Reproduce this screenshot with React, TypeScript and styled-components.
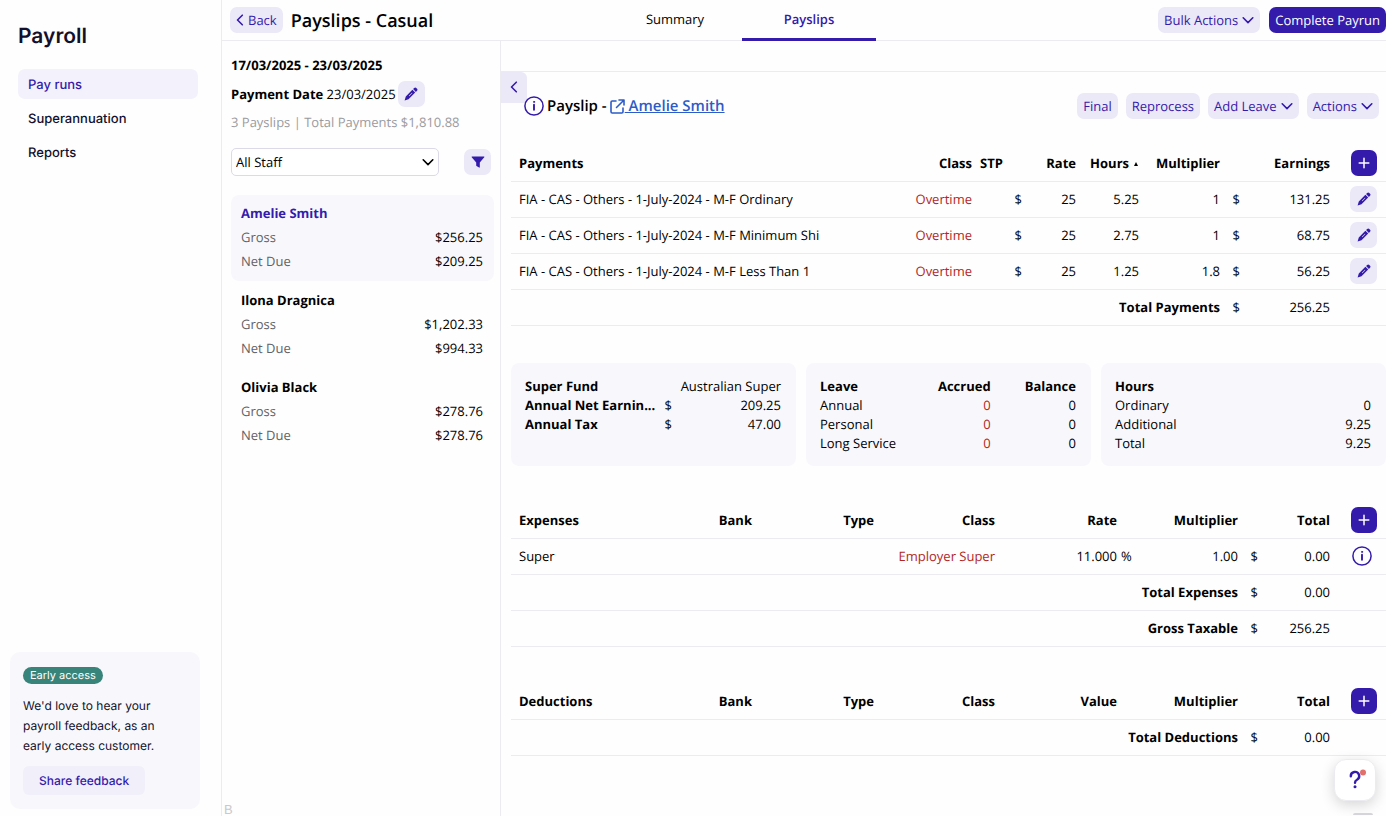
import React from "react";
import styled, { createGlobalStyle, css } from "styled-components";

const ink = "#000";
const violet = "#351bab";
const tint = "#ebe8f7";
const line = "#ececf0";
const red = "#b3261e";

const GlobalStyle = createGlobalStyle`
  * { box-sizing: border-box; }
  body {
    margin: 0;
    background: #fefefe;
    color: ${ink};
    font-family: "Open Sans", "Noto Sans", sans-serif;
    font-size: 13px;
    line-height: 18px;
    text-rendering: geometricPrecision;
  }
  button, select { font: inherit; color: inherit; text-rendering: inherit; }
  h1, h2, p, ul { margin: 0; padding: 0; }
  ul { list-style: none; }
`;

const Shell = styled.div`
  display: flex;
  min-height: 100vh;
`;

const Sidebar = styled.aside`
  display: flex;
  flex-direction: column;
  flex: 0 0 222px;
  padding: 21px 21px 7px 10px;
  border-right: 1px solid ${line};
  font-family: Inter, sans-serif;
  color: #14102b;
`;

const Brand = styled.h1`
  padding-left: 8px;
  font-size: 21px;
  line-height: 32px;
  font-weight: 600;
`;

const Nav = styled.nav`
  display: flex;
  flex-direction: column;
  gap: 4px;
  margin: 16px 2px 0 8px;
`;

const NavLink = styled.a<{ $active?: boolean }>`
  padding: 7px 10px 5px;
  border-radius: 7px;
  font-size: 13px;
  line-height: 18px;
  font-weight: 500;
  text-decoration: none;
  color: ${(p) => (p.$active ? violet : "#14102b")};
  background: ${(p) => (p.$active ? "#f3f1fb" : "transparent")};
`;

const Feedback = styled.section`
  margin-top: auto;
  padding: 14px 13px 14px;
  border-radius: 10px;
  background: #f8f8fc;
  font-size: 12px;
`;

const Badge = styled.span`
  display: inline-block;
  padding: 0 7px;
  border-radius: 9px;
  background: #38837a;
  color: #fff;
  font-size: 11px;
  line-height: 17px;
`;

const FeedbackText = styled.p`
  margin: 12px 0 10px;
  line-height: 20px;
`;

const ShareButton = styled.button`
  padding: 5px 16px;
  border: 0;
  border-radius: 6px;
  background: #f1effa;
  color: ${violet};
  font-weight: 500;
  line-height: 19px;
`;

const Workspace = styled.div`
  display: flex;
  flex-direction: column;
  flex: 1;
  min-width: 0;
`;

const Topbar = styled.header`
  display: flex;
  align-items: stretch;
  height: 41px;
  border-bottom: 1px solid ${line};
`;

const TitleGroup = styled.div`
  display: flex;
  align-items: center;
  gap: 8px;
  flex: 0 0 386px;
  padding-left: 8px;
`;

const PageTitle = styled.h1`
  && { padding-top: 2px; }
  font-size: 18px;
  line-height: 24px;
  font-weight: 600;
`;

const Tab = styled.a<{ $active?: boolean }>`
  width: 134px;
  height: 41px;
  padding-top: 10px;
  text-align: center;
  text-decoration: none;
  color: ${(p) => (p.$active ? violet : ink)};
  font-weight: ${(p) => (p.$active ? 600 : 400)};
  border-bottom: 3px solid ${(p) => (p.$active ? violet : "transparent")};
`;

const TopActions = styled.div`
  display: flex;
  align-items: center;
  gap: 9px;
  margin-left: auto;
`;

const Button = styled.button<{ $primary?: boolean }>`
  display: inline-flex;
  align-items: center;
  gap: 4px;
  height: 26px;
  padding: 0 6px;
  border: 0;
  border-radius: 7px;
  white-space: nowrap;
  background: ${(p) => (p.$primary ? violet : tint)};
  color: ${(p) => (p.$primary ? "#fff" : violet)};
`;

const IconButton = styled(Button)`
  justify-content: center;
  width: 27px;
  padding: 0;
  vertical-align: middle;
`;

const InfoButton = styled(IconButton)`
  width: 30px;
  background: none;
`;

const AddSquare = styled(IconButton)`
  width: 26px;
`;

const Body = styled.div`
  display: flex;
  flex: 1;
`;

const StaffPanel = styled.aside`
  display: flex;
  flex-direction: column;
  flex: 0 0 279px;
  padding: 15px 6px 0 9px;
  border-right: 1px solid ${line};
`;

const Period = styled.p`
  font-weight: 700;
`;

const PaymentDate = styled.div`
  display: flex;
  align-items: center;
  gap: 2px;
  margin-top: 7px;
`;

const Muted = styled.p`
  margin-top: 6px;
  color: #9b9b9f;
`;

const FilterRow = styled.div`
  display: flex;
  justify-content: space-between;
  align-items: center;
  margin: 17px 3px 19px 0;
`;

const SelectWrap = styled.div`
  display: grid;
  width: 208px;
  align-items: center;
  & > * { grid-area: 1 / 1; }
  & > svg { justify-self: end; margin-right: 5px; pointer-events: none; }
`;

const Select = styled.select`
  appearance: none;
  height: 28px;
  padding: 0 4px;
  border: 1px solid #dcdae8;
  border-radius: 5px;
  background: #fff;
`;

const StaffCard = styled.li<{ $active?: boolean }>`
  display: grid;
  grid-template-columns: 1fr auto;
  margin-bottom: 1px;
  padding: 6px 11px 8px 10px;
  border-radius: 8px;
  line-height: 24px;
  background: ${(p) => (p.$active ? "#f8f8fc" : "transparent")};
`;

const StaffName = styled.strong<{ $active?: boolean }>`
  grid-column: 1 / -1;
  color: ${(p) => (p.$active ? violet : ink)};
`;

const StaffLabel = styled.span`
  color: #626266;
`;

const StaffAmount = styled.span`
  text-align: right;
`;

const FootNote = styled.span`
  margin: auto 0 0 -7px;
  font-family: "Liberation Sans", sans-serif;
  font-size: 13px;
  line-height: 12px;
  color: #c9c9cd;
`;

const Detail = styled.main`
  position: relative;
  flex: 1;
  min-width: 0;
`;

const Strip = styled.div`
  height: 31px;
  border-bottom: 1px solid ${line};
`;

const Collapse = styled.button`
  position: absolute;
  top: 31px;
  left: 0;
  width: 26px;
  height: 31px;
  padding: 0;
  border: 0;
  border-radius: 0 6px 0 0;
  background: ${tint};
  color: ${violet};
`;

const SlipHead = styled.div`
  display: flex;
  align-items: center;
  gap: 8px;
  padding: 21px 7px 27px 23px;
  & > h2 { margin-right: auto; }
`;

const SlipTitle = styled.h2`
  position: relative;
  display: flex;
  align-items: center;
  gap: 3px;
  font-size: 15px;
  line-height: 22px;
  font-weight: 600;
`;

const StaffLink = styled.a`
  display: flex;
  align-items: center;
  color: #2d5cc8;
  white-space: pre;
`;

const Sections = styled.div`
  display: flex;
  flex-direction: column;
  gap: 37px;
  padding-left: 10px;
`;

const Table = styled.table`
  width: 100%;
  table-layout: fixed;
  border-collapse: separate;
  border-spacing: 0;
  & tr > * {
    height: 36px;
    padding: 0 4px 2px;
    text-align: right;
    white-space: nowrap;
    border-bottom: 1px solid ${line};
  }
  & tr > *:first-child { padding-left: 8px; }
  & tr > *:last-child { padding: 0 9px 1px 0; }
`;

const cell = css<{ $left?: boolean; $red?: boolean; $flush?: boolean }>`
  && { text-align: ${(p) => (p.$left ? "left" : "right")}; }
  ${(p) => p.$flush && "&& { padding-left: 0; padding-right: 0; }"}
  color: ${(p) => (p.$red ? red : ink)};
`;
const Td = styled.td`${cell}`;
const Th = styled.th`${cell}`;

const Col = styled.col<{ $w?: number }>`
  width: ${(p) => (p.$w ? `${p.$w}px` : "auto")};
`;

const Cards = styled.div`
  display: grid;
  grid-template-columns: repeat(3, 1fr);
  gap: 10px;
`;

const Card = styled.section`
  min-width: 0;
  padding: 14px 15px 13px 14px;
  border-radius: 8px;
  background: #f8f8fc;
`;

const CardTable = styled.table`
  width: 100%;
  table-layout: fixed;
  border-spacing: 0;
  line-height: 19px;
  & tr > * { padding: 0; text-align: right; }
  & tr > *:first-child { text-align: left; white-space: nowrap; }
`;

const Flag = styled.td`
  color: ${red};
`;

const Help = styled.button`
  position: fixed;
  right: 10px;
  bottom: 15px;
  display: grid;
  place-items: center;
  width: 42px;
  height: 42px;
  padding: 0;
  border: 1px solid #ececf0;
  border-radius: 12px;
  background: #fff;
  box-shadow: 0 4px 14px rgba(0, 0, 0, 0.16);
  &::after {
    content: "";
    position: absolute;
    top: 53px;
    left: 18px;
    width: 20px;
    height: 2px;
    border-radius: 4px 4px 0 0;
    background: #d4d4da;
  }
`;

const stroke = {
  fill: "none",
  stroke: "currentColor",
  strokeLinecap: "round" as const,
  strokeLinejoin: "round" as const,
};

const Down = () => (
  <svg width="12" height="12" viewBox="0 0 12 12" {...stroke} strokeWidth="1.6">
    <path d="M1.200 3.800 6 8.600l4.800-4.800" />
  </svg>
);
const Left = () => (
  <svg width="8" height="12" viewBox="0 0 8 12" {...stroke} strokeWidth="1.6">
    <path d="M6.300 1.200 1.500 6l4.800 4.800" />
  </svg>
);
const Plus = () => (
  <svg width="12" height="12" viewBox="0 0 12 12" {...stroke} strokeWidth="1.500">
    <path d="M6 1.200v9.600M1.200 6h9.600" />
  </svg>
);
const Pencil = () => (
  <svg width="14" height="14" viewBox="0 0 14 14" fill="currentColor">
    <path fillRule="evenodd" d="M10.200 1a1.500 1.500 0 0 1 2.100 0l.7.7a1.500 1.500 0 0 1 0 2.100l-1.100 1.100-2.800-2.800zM8.400 2.800l2.800 2.800-6.700 6.600-3.900 1.200 1.200-3.900zM8 5.700 4.900 8.800l.4.4 3.100-3.100z" />
  </svg>
);
const Funnel = () => (
  <svg width="14" height="14" viewBox="0 0 14 14" fill="currentColor">
    <path d="M1 1.500h12c.4 0 .5.400.3.700L8.800 7.500v4.800c0 .4-.4.500-.7.300L5.500 11c-.2-.1-.3-.3-.3-.5v-3L.7 2.200c-.2-.3-.1-.7.3-.7z" />
  </svg>
);
const Info = () => (
  <svg width="20" height="20" viewBox="0 0 20 20" {...stroke} color={violet}>
    <circle cx="10" cy="10" r="9.100" strokeWidth="1.500" />
    <path d="M10 8.800v5" strokeWidth="1.900" />
    <circle cx="10" cy="5.900" r="0.600" strokeWidth="1" />
  </svg>
);
const External = () => (
  <svg width="15" height="15" viewBox="0 0 15 15" {...stroke} strokeWidth="1.600">
    <path d="M6 2H2.200Q1 2 1 3.200v9.600Q1 14 2.200 14h9.600q1.200 0 1.200-1.200V9M9 1h5v5M13.800 1.200 6.500 8.500" />
  </svg>
);

const SortMark = styled.svg`
  margin: 0 1px 2px 5px;
`;

const navItems = ["Pay runs", "Superannuation", "Reports"];

const staff = [
  { name: "Amelie Smith", gross: "$256.25", net: "$209.25" },
  { name: "Ilona Dragnica", gross: "$1,202.33", net: "$994.33" },
  { name: "Olivia Black", gross: "$278.76", net: "$278.76" },
];

const payments = [
  { name: "M-F Ordinary", hours: "5.25", multiplier: "1", earnings: "131.25" },
  { name: "M-F Minimum Shi", hours: "2.75", multiplier: "1", earnings: "68.75" },
  { name: "M-F Less Than 1", hours: "1.25", multiplier: "1.8", earnings: "56.25" },
];

const AddButton = ({ label }: { label: string }) => (
  <AddSquare $primary aria-label={label}>
    <Plus />
  </AddSquare>
);

const LedgerHead = ({ title, value }: { title: string; value: string }) => (
  <>
    <colgroup>
      <Col />
      {[122, 122, 121, 122, 15, 106, 20, 72, 52].map((w, i) => (
        <Col key={i} $w={w} />
      ))}
    </colgroup>
    <thead>
      <tr>
        <Th $left scope="col">{title}</Th>
        <Th scope="col">Bank</Th>
        <Th scope="col">Type</Th>
        <Th scope="col">Class</Th>
        <Th scope="col">{value}</Th>
        <Th scope="col" colSpan={2}>Multiplier</Th>
        <Th scope="col" colSpan={2}>Total</Th>
        <Td><AddButton label={`Add to ${title}`} /></Td>
      </tr>
    </thead>
  </>
);

const LedgerTotal = ({ label, amount }: { label: string; amount: string }) => (
  <tr>
    <Th scope="row" colSpan={7}>{label}</Th>
    <Td>$</Td>
    <Td>{amount}</Td>
    <Td />
  </tr>
);

export default function App() {
  return (
    <Shell>
      <GlobalStyle />
      <Sidebar>
        <Brand>Payroll</Brand>
        <Nav>
          {navItems.map((item, i) => (
            <NavLink key={item} href="#" $active={i === 0}>{item}</NavLink>
          ))}
        </Nav>
        <Feedback>
          <Badge>Early access</Badge>
          <FeedbackText>We'd love to hear your<br />payroll feedback, as an<br />early access customer.</FeedbackText>
          <ShareButton>Share feedback</ShareButton>
        </Feedback>
      </Sidebar>
      <Workspace>
        <Topbar>
          <TitleGroup>
            <Button><Left />Back</Button>
            <PageTitle>Payslips - Casual</PageTitle>
          </TitleGroup>
          <Tab href="#">Summary</Tab>
          <Tab href="#" $active>Payslips</Tab>
          <TopActions>
            <Button>Bulk Actions <Down /></Button>
            <Button $primary>Complete Payrun</Button>
          </TopActions>
        </Topbar>
        <Body>
          <StaffPanel>
            <Period>17/03/2025 - 23/03/2025</Period>
            <PaymentDate>
              <span><strong>Payment Date</strong> 23/03/2025</span>
              <IconButton aria-label="Edit payment date"><Pencil /></IconButton>
            </PaymentDate>
            <Muted>3 Payslips | Total Payments $1,810.88</Muted>
            <FilterRow>
              <SelectWrap>
                <Select aria-label="Staff"><option>All Staff</option></Select>
                <Down />
              </SelectWrap>
              <IconButton aria-label="Filter"><Funnel /></IconButton>
            </FilterRow>
            <ul>
              {staff.map((s, i) => (
                <StaffCard key={s.name} $active={i === 0}>
                  <StaffName $active={i === 0}>{s.name}</StaffName>
                  <StaffLabel>Gross</StaffLabel><StaffAmount>{s.gross}</StaffAmount>
                  <StaffLabel>Net Due</StaffLabel><StaffAmount>{s.net}</StaffAmount>
                </StaffCard>
              ))}
            </ul>
            <FootNote>B</FootNote>
          </StaffPanel>
          <Detail>
            <Strip />
            <Collapse aria-label="Collapse staff list"><Left /></Collapse>
            <SlipHead>
              <SlipTitle>
                <Info />
                <span>Payslip -</span>
                <StaffLink href="#"><External /> Amelie Smith</StaffLink>
              </SlipTitle>
              <Button>Final</Button>
              <Button>Reprocess</Button>
              <Button>Add Leave <Down /></Button>
              <Button>Actions <Down /></Button>
            </SlipHead>
            <Sections>
              <Table>
                <colgroup>
                  <Col />
                  {[100, 30, 20, 54, 63, 81, 20, 90, 52].map((w, i) => (
                    <Col key={i} $w={w} />
                  ))}
                </colgroup>
                <thead>
                  <tr>
                    <Th $left scope="col">Payments</Th>
                    <Th scope="col">Class</Th>
                    <Th $left scope="col">STP</Th>
                    <Th scope="col" colSpan={2}>Rate</Th>
                    <Th scope="col">
                      Hours
                      <SortMark width="4" height="4" viewBox="0 0 4 4"><path d="M2 0 4 4H0z" /></SortMark>
                    </Th>
                    <Th scope="col">Multiplier</Th>
                    <Th scope="col" colSpan={2}>Earnings</Th>
                    <Td><AddButton label="Add payment" /></Td>
                  </tr>
                </thead>
                <tbody>
                  {payments.map((p) => (
                    <tr key={p.name}>
                      <Td $left>FIA - CAS - Others - 1-July-2024 - {p.name}</Td>
                      <Td $red>Overtime</Td>
                      <Td />
                      <Td>$</Td>
                      <Td>25</Td>
                      <Td>{p.hours}</Td>
                      <Td>{p.multiplier}</Td>
                      <Td>$</Td>
                      <Td>{p.earnings}</Td>
                      <Td><IconButton aria-label="Edit payment"><Pencil /></IconButton></Td>
                    </tr>
                  ))}
                  <tr>
                    <Th scope="row" colSpan={7}>Total Payments</Th>
                    <Td>$</Td>
                    <Td>256.25</Td>
                    <Td />
                  </tr>
                </tbody>
              </Table>
              <Cards>
                <Card>
                  <CardTable>
                    <colgroup><Col $w={126} /><Col $w={21} /><Col /></colgroup>
                    <tbody>
                      <tr><th scope="row">Super Fund</th><td colSpan={2}>Australian Super</td></tr>
                      <tr><th scope="row">Annual Net Earnin...</th><td>$</td><td>209.25</td></tr>
                      <tr><th scope="row">Annual Tax</th><td>$</td><td>47.00</td></tr>
                    </tbody>
                  </CardTable>
                </Card>
                <Card>
                  <CardTable>
                    <thead>
                      <tr><th scope="col">Leave</th><th scope="col">Accrued</th><th scope="col">Balance</th></tr>
                    </thead>
                    <tbody>
                      {["Annual", "Personal", "Long Service"].map((l) => (
                        <tr key={l}><td>{l}</td><Flag>0</Flag><td>0</td></tr>
                      ))}
                    </tbody>
                  </CardTable>
                </Card>
                <Card>
                  <CardTable>
                    <thead><tr><th scope="col" colSpan={2}>Hours</th></tr></thead>
                    <tbody>
                      <tr><td>Ordinary</td><td>0</td></tr>
                      <tr><td>Additional</td><td>9.25</td></tr>
                      <tr><td>Total</td><td>9.25</td></tr>
                    </tbody>
                  </CardTable>
                </Card>
              </Cards>
              <Table>
                <LedgerHead title="Expenses" value="Rate" />
                <tbody>
                  <tr>
                    <Td $left colSpan={3}>Super</Td>
                    <Td $red>Employer Super</Td>
                    <Td>11.000</Td>
                    <Td $left $flush>%</Td>
                    <Td>1.00</Td>
                    <Td>$</Td>
                    <Td>0.00</Td>
                    <Td><InfoButton aria-label="Expense details"><Info /></InfoButton></Td>
                  </tr>
                  <LedgerTotal label="Total Expenses" amount="0.00" />
                  <LedgerTotal label="Gross Taxable" amount="256.25" />
                </tbody>
              </Table>
              <Table>
                <LedgerHead title="Deductions" value="Value" />
                <tbody>
                  <LedgerTotal label="Total Deductions" amount="0.00" />
                </tbody>
              </Table>
            </Sections>
          </Detail>
        </Body>
      </Workspace>
      <Help aria-label="Help">
        <svg width="28" height="28" viewBox="0 0 28 28" {...stroke} color={violet}>
          <path d="M9.800 10.200a4.200 4.200 0 1 1 6.200 3.600c-1.400.7-2 1.400-2 2.900" strokeWidth="2.400" />
          <circle cx="14" cy="20.800" r="1.500" fill="currentColor" stroke="none" />
          <circle cx="22" cy="6.500" r="3" fill="#e0706c" stroke="none" />
        </svg>
      </Help>
    </Shell>
  );
}
